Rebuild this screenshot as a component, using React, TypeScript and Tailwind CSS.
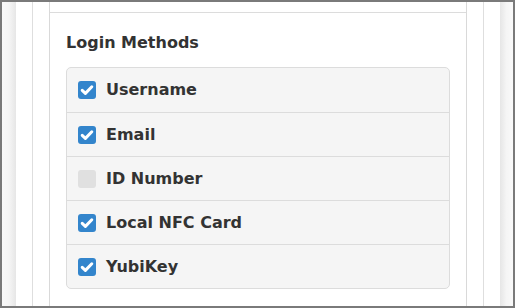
import React from "react";

const items = [
  { label: "Username", checked: true },
  { label: "Email", checked: true },
  { label: "ID Number", checked: false },
  { label: "Local NFC Card", checked: true },
  { label: "YubiKey", checked: true },
];

function Box({ checked }: { checked: boolean }) {
  if (!checked) return <div className="w-[18px] h-[18px] rounded-[3px] bg-[#e0e0e0] shrink-0" />;
  return (
    <div className="w-[18px] h-[18px] rounded-[3px] bg-[#3385cc] shrink-0 flex items-center justify-center">
      <svg width="18" height="18" viewBox="0 0 18 18">
        <polyline points="4.2,9.3 7.4,12.4 13.8,5.8" fill="none" stroke="white" strokeWidth="3" strokeLinecap="round" strokeLinejoin="round" />
      </svg>
    </div>
  );
}

export default function App() {
  return (
    <div
      className="w-[515px] h-[308px] border-2 border-[#7a7a7a] bg-white flex overflow-hidden text-[#333]"
      style={{ fontFamily: '"DejaVu Sans", sans-serif' }}
    >
      <div className="w-[14px] h-full bg-gradient-to-r from-[#f9f9f9] via-[#f5f5f5] to-[#e6e6e6] shrink-0" />
      <div className="flex-1 flex px-[16px] bg-white">
        <div className="flex-1 flex border-x border-[#dedede] px-[16px]">
          <div className="flex-1 border-x border-[#d9d9d9] flex flex-col">
            <div className="h-[11px] border-b border-[#dcdcdc]" />
            <div className="px-[16px] pt-[18px]">
              <div className="text-[16px] leading-[24px] font-bold mb-[12px]">Login Methods</div>
              <div className="border border-[#dcdcdc] rounded-[5px] bg-[#f5f5f5]">
                {items.map((it, i) => (
                  <div
                    key={it.label}
                    className={`h-[44px] flex items-center pl-[11px] gap-[10px] ${i > 0 ? "border-t border-[#dcdcdc]" : ""}`}
                  >
                    <Box checked={it.checked} />
                    <span className="text-[16px] leading-[24px] font-bold">{it.label}</span>
                  </div>
                ))}
              </div>
            </div>
          </div>
        </div>
      </div>
      <div className="w-[13px] h-full bg-gradient-to-r from-[#e6e6e6] via-[#f5f5f5] to-[#f9f9f9] shrink-0" />
    </div>
  );
}
